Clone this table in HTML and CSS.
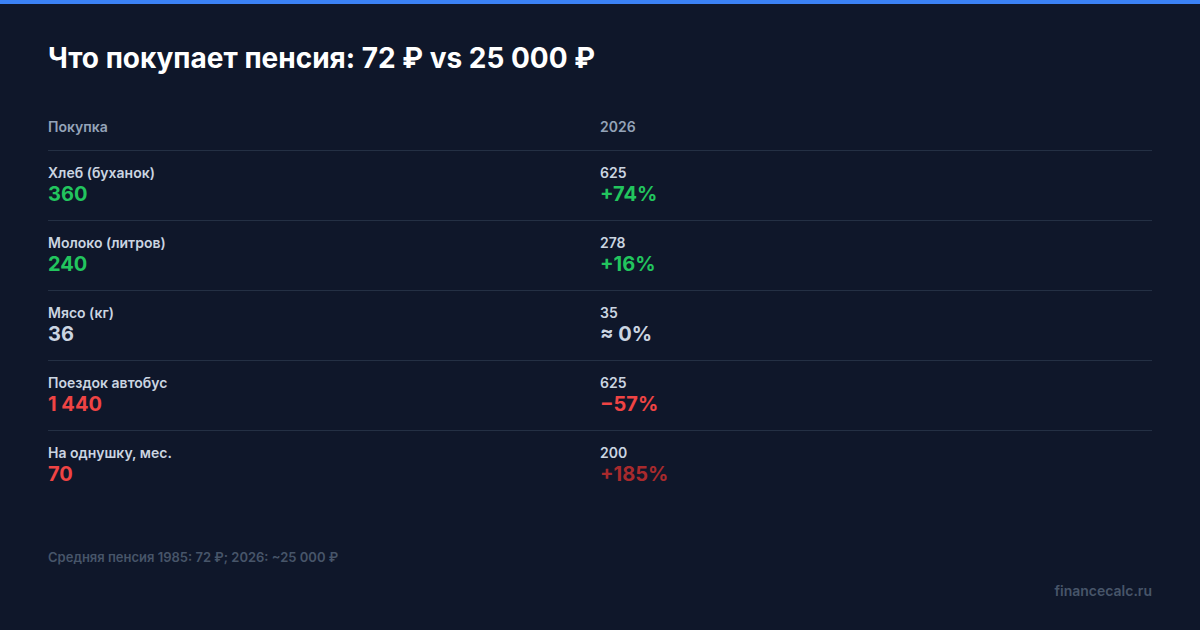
FILE: index.html
```html
<!DOCTYPE html>
<html lang="ru">
<head>
<meta charset="utf-8">
<link rel="stylesheet" href="styles.css">
</head>
<body>
<div class="topbar"></div>
<main class="card">
  <h1 class="title">Что покупает пенсия: 72 ₽ vs 25 000 ₽</h1>
  <div class="table">
    <div class="row head">
      <div class="cell"><span class="th">Покупка</span></div>
      <div class="cell"><span class="th">2026</span></div>
    </div>
    <div class="row">
      <div class="cell"><div class="label">Хлеб (буханок)</div><div class="value green">360</div></div>
      <div class="cell"><div class="label">625</div><div class="value green">+74%</div></div>
    </div>
    <div class="row">
      <div class="cell"><div class="label">Молоко (литров)</div><div class="value green">240</div></div>
      <div class="cell"><div class="label">278</div><div class="value green">+16%</div></div>
    </div>
    <div class="row">
      <div class="cell"><div class="label">Мясо (кг)</div><div class="value grey">36</div></div>
      <div class="cell"><div class="label">35</div><div class="value grey">≈ 0%</div></div>
    </div>
    <div class="row">
      <div class="cell"><div class="label">Поездок автобус</div><div class="value red">1 440</div></div>
      <div class="cell"><div class="label">625</div><div class="value red">−57%</div></div>
    </div>
    <div class="row last">
      <div class="cell"><div class="label">На однушку, мес.</div><div class="value red">70</div></div>
      <div class="cell"><div class="label">200</div><div class="value darkred">+185%</div></div>
    </div>
  </div>
  <p class="note">Средняя пенсия 1985: 72 ₽; 2026: ~25 000 ₽</p>
  <div class="brand">financecalc.ru</div>
</main>
</body>
</html>
```

FILE: styles.css
```css
* { box-sizing: border-box; }
html, body {
  margin: 0;
  padding: 0;
  width: 1200px;
  height: 630px;
  overflow: hidden;
  background: #0f172a;
  font-family: Inter, "Noto Sans", "Liberation Sans", sans-serif;
}
.topbar {
  height: 4px;
  background: #3b82f6;
}
.card {
  padding: 37px 48px 0 48px;
  display: flex;
  flex-direction: column;
}
.title {
  margin: 0;
  font-size: 28px;
  line-height: 34px;
  font-weight: 700;
  color: #ffffff;
}
.table {
  margin-top: 43px;
  display: flex;
  flex-direction: column;
}
.row {
  display: grid;
  grid-template-columns: 1fr 1fr;
  padding: 13px 0 14px 0;
  border-bottom: 1px solid #243044;
}
.row.head {
  padding: 0 0 14px 0;
}
.row.last {
  border-bottom: none;
}
.th {
  display: block;
  font-size: 14px;
  line-height: 18px;
  font-weight: 600;
  color: #94a3b8;
}
.label {
  font-size: 14px;
  line-height: 18px;
  font-weight: 600;
  color: #cbd5e1;
}
.value {
  font-size: 20px;
  line-height: 24px;
  font-weight: 700;
}
.green { color: #22c55e; }
.red { color: #ef4444; }
.grey { color: #cbd5e1; }
.darkred { color: #a82a2d; }
.note {
  margin: 49px 0 0 0;
  font-size: 13px;
  line-height: 16px;
  font-weight: 600;
  color: #475569;
}
.brand {
  margin-top: 17px;
  align-self: flex-end;
  font-size: 14px;
  line-height: 18px;
  font-weight: 600;
  color: #475569;
}
```
